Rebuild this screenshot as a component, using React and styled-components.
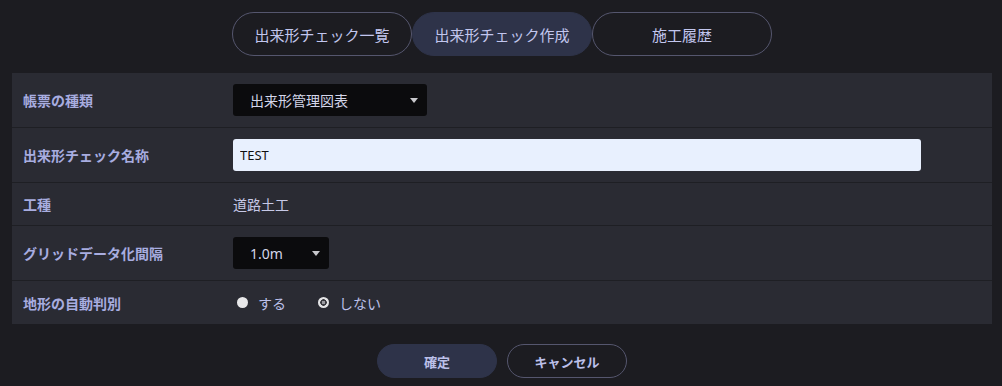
import React, { useState } from 'react';
import styled, { createGlobalStyle } from 'styled-components';

const GlobalStyle = createGlobalStyle`
    body {
        margin: 0;
        background: #1c1c21;
        font-family: "Noto Sans", "Noto Sans CJK JP", sans-serif;
    }
`

const tabs = ['出来形チェック一覧', '出来形チェック作成', '施工履歴'];

function App() {
    const [tab, setTab] = useState(1);
    const [terrain, setTerrain] = useState('no');
    const [name, setName] = useState('TEST');

    return (
        <Page>
            <GlobalStyle />
            <Tabs>
                {tabs.map((t, i) => (
                    <Tab key={t} $active={i === tab} onClick={() => setTab(i)}>{t}</Tab>
                ))}
            </Tabs>

            <Panel>
                <Row $h={54}>
                    <Label>帳票の種類</Label>
                    <Select $w={194}>
                        出来形管理図表
                        <Caret />
                    </Select>
                </Row>
                <Row $h={54}>
                    <Label>出来形チェック名称</Label>
                    <Input value={name} onChange={e => setName(e.target.value)} />
                </Row>
                <Row $h={42}>
                    <Label>工種</Label>
                    <Value>道路土工</Value>
                </Row>
                <Row $h={54}>
                    <Label>グリッドデータ化間隔</Label>
                    <Select $w={96}>
                        1.0m
                        <Caret />
                    </Select>
                </Row>
                <Row $h={43} $last>
                    <Label>地形の自動判別</Label>
                    <Radios>
                        <Radio onClick={() => setTerrain('yes')}>
                            <Dot $checked={terrain === 'yes'} />
                            する
                        </Radio>
                        <Radio onClick={() => setTerrain('no')}>
                            <Dot $checked={terrain === 'no'} />
                            しない
                        </Radio>
                    </Radios>
                </Row>
            </Panel>

            <Actions>
                <Button $primary>確定</Button>
                <Button>キャンセル</Button>
            </Actions>
        </Page>
    )
}

export default App


const Page = styled.div`
    width: 1002px;
    height: 386px;
    padding-top: 12px;
    box-sizing: border-box;
    overflow: hidden;
`

const Tabs = styled.div`
    display: flex;
    justify-content: center;
    padding-left: 2px;
`

const Tab = styled.button`
    width: 180px;
    height: 44px;
    box-sizing: border-box;
    border-radius: 22px;
    border: 1px solid ${p => p.$active ? '#2e3349' : '#55566e'};
    background: ${p => p.$active ? '#2e3349' : 'transparent'};
    color: #c2c6ee;
    font-family: inherit;
    font-size: 15px;
    font-weight: 400;
    cursor: pointer;
`

const Panel = styled.div`
    margin: 17px 10px 0 12px;
    background: #2a2b33;
`

const Row = styled.div`
    display: grid;
    grid-template-columns: 221px 1fr;
    align-items: center;
    height: ${p => p.$h}px;
    border-bottom: ${p => p.$last ? 'none' : '1px solid #1e1f24'};
`

const Label = styled.div`
    padding-left: 11px;
    font-size: 14px;
    font-weight: 700;
    color: #a8ade0;
`

const Value = styled.div`
    font-size: 14px;
    color: #c6c9e6;
`

const Select = styled.div`
    position: relative;
    width: ${p => p.$w}px;
    height: 32px;
    box-sizing: border-box;
    padding-left: 17px;
    display: flex;
    align-items: center;
    background: #0b0b0d;
    border-radius: 3px;
    font-size: 14px;
    color: #d4d6ea;
`

const Caret = styled.span`
    position: absolute;
    right: 9px;
    top: 14px;
    width: 0;
    height: 0;
    border-left: 4px solid transparent;
    border-right: 4px solid transparent;
    border-top: 5px solid #c8c8cc;
`

const Input = styled.input`
    width: 688px;
    height: 32px;
    box-sizing: border-box;
    padding: 0 7px;
    border: none;
    border-radius: 3px;
    background: #e8f0fe;
    color: #111;
    font-family: inherit;
    font-size: 13px;
    outline: none;
`

const Radios = styled.div`
    display: flex;
    gap: 32px;
    padding-left: 4px;
`

const Radio = styled.label`
    display: flex;
    align-items: center;
    gap: 10px;
    font-size: 14px;
    color: #bcc0ea;
    cursor: pointer;
`

const Dot = styled.span`
    width: 11px;
    height: 11px;
    border-radius: 50%;
    background: ${p => p.$checked
        ? 'radial-gradient(circle, #9a9aa0 0 1.5px, #3a3a40 2px 3px, #e4e4e6 3.5px)'
        : '#e8e8ea'};
`

const Actions = styled.div`
    display: flex;
    justify-content: center;
    gap: 10px;
    margin-top: 20px;
    padding-left: 2px;
`

const Button = styled.button`
    width: 120px;
    height: 34px;
    box-sizing: border-box;
    border-radius: 17px;
    border: 1px solid ${p => p.$primary ? '#2e3349' : '#55566e'};
    background: ${p => p.$primary ? '#2e3349' : 'transparent'};
    color: #bcc0ea;
    font-family: inherit;
    font-size: 13px;
    font-weight: 700;
    cursor: pointer;
`
